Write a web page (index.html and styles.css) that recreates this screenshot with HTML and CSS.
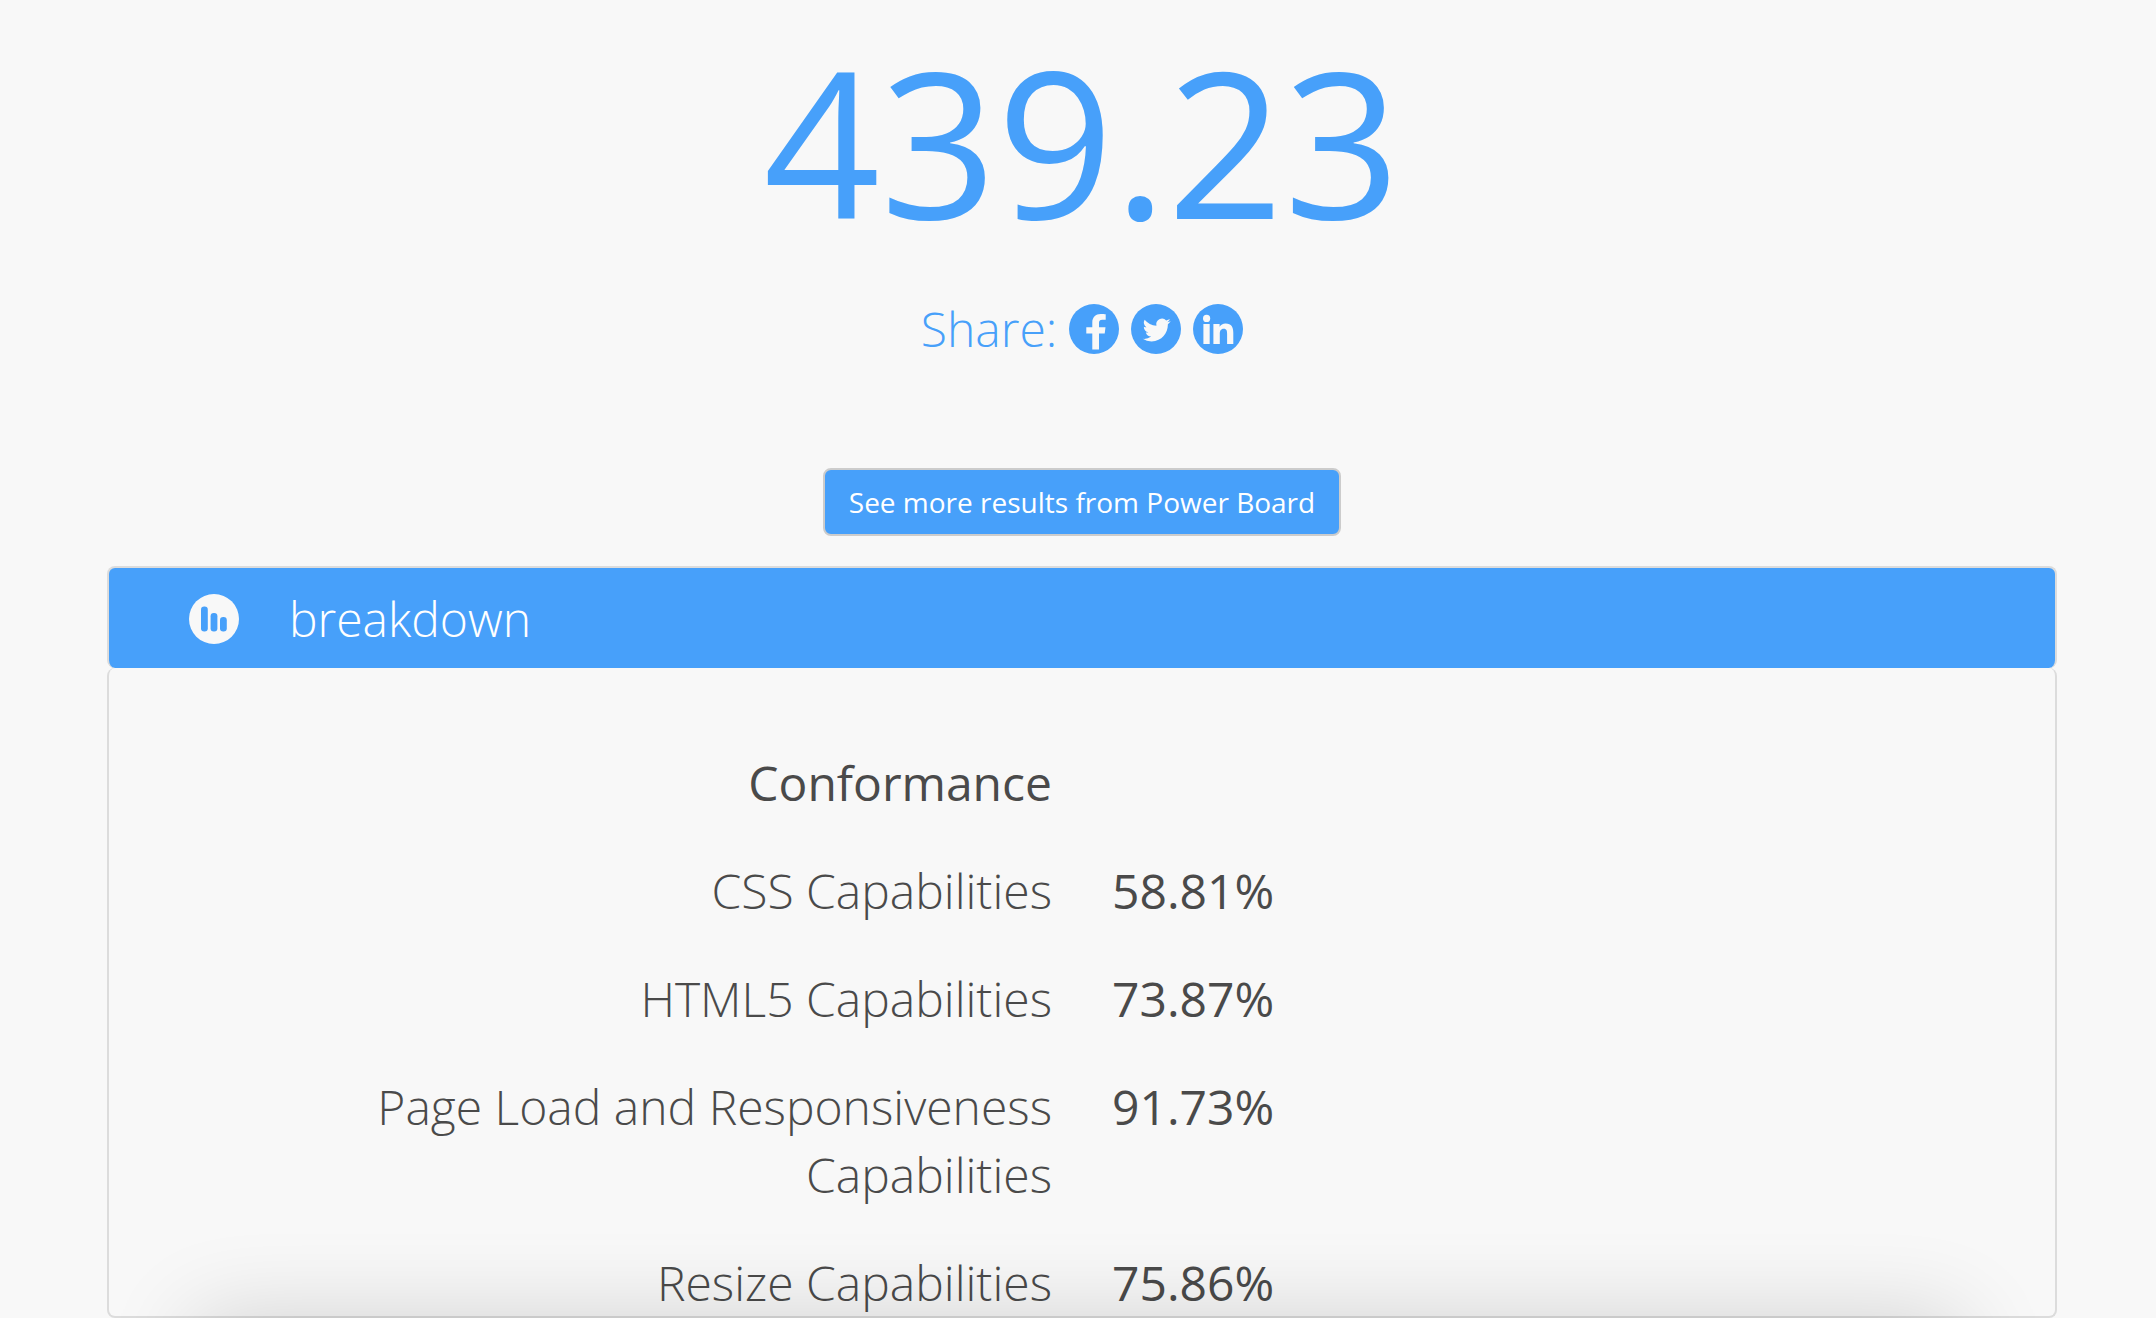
FILE: index.html
```html
<!DOCTYPE html>
<html lang="en">

<head>
    <meta charset="UTF-8">
    <title>Benchmark results</title>
    <link rel="stylesheet" href="styles.css">
</head>

<body>

    <main class="container">
        <h1 class="score">439.23</h1>

        <div class="share">
            <span>Share:</span>
            <a href="#" aria-label="Share on Facebook">
                <svg class="icon" viewBox="0 0 50 50">
                    <circle cx="25" cy="25" r="25" fill="#47a0fa"/>
                    <path fill="#f8f8f8" d="M23.3 45.5V29.4H17.3V23.3H23.3V18.6C23.3 13 26.7 10 31.7 10C33.8 10 35.8 10.1 36.7 10.3V15.8H33.4C30.6 15.8 30 17.1 30 19.1V23.3H36.5L35.7 29.4H30V45.5Z"/>
                </svg>
            </a>
            <a href="#" aria-label="Share on Twitter">
                <svg class="icon" viewBox="0 0 50 50">
                    <circle cx="25" cy="25" r="25" fill="#47a0fa"/>
                    <path fill="#f8f8f8" transform="translate(11.7 12) scale(1.167)" d="M23.95 4.57a10 10 0 0 1-2.82.77 4.96 4.96 0 0 0 2.16-2.72c-.95.55-2 .96-3.13 1.18a4.92 4.92 0 0 0-8.38 4.48C7.69 8.1 4.07 6.13 1.64 3.16a4.92 4.92 0 0 0 1.52 6.57 4.9 4.9 0 0 1-2.23-.61v.06c0 2.38 1.7 4.37 3.95 4.82a5 5 0 0 1-2.21.09 4.94 4.94 0 0 0 4.6 3.42A9.87 9.87 0 0 1 0 19.54a13.99 13.99 0 0 0 7.55 2.21c9.05 0 14-7.5 14-13.98 0-.21 0-.42-.02-.63a9.94 9.94 0 0 0 2.46-2.55z"/>
                </svg>
            </a>
            <a href="#" aria-label="Share on LinkedIn">
                <svg class="icon" viewBox="0 0 50 50">
                    <circle cx="25" cy="25" r="25" fill="#47a0fa"/>
                    <g fill="#f8f8f8">
                        <circle cx="13.6" cy="14.4" r="3.6"/>
                        <path d="M10.4 20H16.7V40H10.4Z"/>
                        <path d="M20.4 20H26.6V22.7C27.7 20.8 29.8 19.5 32.6 19.5C38.6 19.5 40.3 23.2 40.3 28.8V40H34.1V30C34.1 27.3 33.8 24.8 30.8 24.8C27.6 24.8 26.8 27.2 26.8 29.9V40H20.4Z"/>
                    </g>
                </svg>
            </a>
        </div>

        <a class="btn" href="#">See more results from Power Board</a>

        <section class="breakdown">
            <h2 class="breakdown-header">
                <svg class="icon" viewBox="0 0 50 50">
                    <circle cx="25" cy="25" r="25" fill="#f8f8f8"/>
                    <g fill="#47a0fa">
                        <rect x="12" y="12.5" width="6.8" height="25" rx="3.2"/>
                        <rect x="21.6" y="19" width="6.8" height="18.5" rx="3.2"/>
                        <rect x="31" y="23" width="6.8" height="14.5" rx="3.2"/>
                    </g>
                </svg>
                <span>breakdown</span>
            </h2>

            <div class="breakdown-body">
                <table>
                    <thead>
                        <tr>
                            <th scope="col">Conformance</th>
                            <td></td>
                        </tr>
                    </thead>
                    <tbody>
                        <tr>
                            <th scope="row">CSS Capabilities</th>
                            <td>58.81%</td>
                        </tr>
                        <tr>
                            <th scope="row">HTML5 Capabilities</th>
                            <td>73.87%</td>
                        </tr>
                        <tr>
                            <th scope="row">Page Load and Responsiveness Capabilities</th>
                            <td>91.73%</td>
                        </tr>
                        <tr>
                            <th scope="row">Resize Capabilities</th>
                            <td>75.86%</td>
                        </tr>
                    </tbody>
                </table>
            </div>
        </section>
    </main>

    <div class="bottom-shadow"></div>

</body>

</html>
```

FILE: styles.css
```css
* {
    margin: 0;
    padding: 0;
    box-sizing: border-box;
}

body {
    font-family: 'Open Sans', sans-serif;
    font-size: 48px;
    font-weight: 300;
    line-height: 68px;
    background: #f8f8f8;
    color: #4a4a4a;
    overflow: hidden;
}

.container {
    display: flex;
    flex-direction: column;
    align-items: center;
    height: 100vh;
    padding: 0 99px 0 107px;
}

.score {
    font-size: 204px;
    font-weight: 400;
    line-height: 280px;
    color: #47a0fa;
}

.share {
    display: flex;
    align-items: center;
    gap: 12px;
    margin-top: 15px;
    color: #47a0fa;
}

.icon {
    display: block;
    width: 50px;
    height: 50px;
}

.btn {
    margin: 105px 0 30px;
    padding: 12px 24px;
    border: 2px solid #ccc;
    border-radius: 8px;
    background: #47a0fa;
    color: white;
    font-size: 28px;
    font-weight: 400;
    line-height: 40px;
    text-decoration: none;
}

.breakdown {
    display: flex;
    flex-direction: column;
    flex: 1;
    width: 100%;
    min-height: 0;
}

.breakdown-header {
    display: flex;
    align-items: center;
    gap: 50px;
    padding: 17px 80px 15px;
    border: 2px solid #dcdcdc;
    border-bottom: none;
    border-radius: 8px;
    background: #47a0fa;
    color: white;
    font-size: 48px;
    font-weight: 300;
}

.breakdown-body {
    flex: 1;
    min-height: 0;
    padding: 61px 100px 0;
    border: 2px solid #dcdcdc;
    border-top: none;
    border-radius: 8px;
    overflow: hidden;
}

table {
    width: 100%;
    table-layout: fixed;
    border-collapse: collapse;
}

th,
td {
    width: 50%;
    padding: 20px 30px;
    vertical-align: top;
}

th {
    text-align: right;
    font-weight: 300;
}

td,
thead th {
    font-weight: 400;
}

/* soft shadow coming up from below the window */
.bottom-shadow {
    position: fixed;
    top: 100%;
    left: 9%;
    right: 9%;
    height: 200px;
    box-shadow: 0 0 90px rgba(0, 0, 0, 0.16);
    pointer-events: none;
}
```
